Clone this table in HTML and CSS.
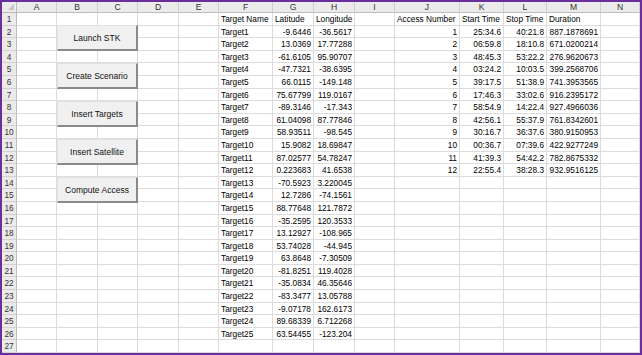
FILE: index.html
```html
<!DOCTYPE html>
<html>
<head>
<meta charset="utf-8">
<link rel="stylesheet" href="styles.css">
</head>
<body>
<div class="sheet">
  <div class="r hd"><span class="corner"></span><span>A</span><span>B</span><span>C</span><span>D</span><span>E</span><span>F</span><span>G</span><span>H</span><span>I</span><span>J</span><span>K</span><span>L</span><span>M</span><span>N</span></div>
  <div class="r"><span class="rh">1</span><span></span><span></span><span></span><span></span><span></span><span>Target Name</span><span>Latitude</span><span>Longitude</span><span></span><span>Access Number</span><span>Start Time</span><span>Stop Time</span><span>Duration</span><span></span></div>
  <div class="r"><span class="rh">2</span><span></span><span></span><span></span><span></span><span></span><span>Target1</span><span class="n">-9.6446</span><span class="n">-36.5617</span><span></span><span class="n">1</span><span class="n">25:34.6</span><span class="n">40:21.8</span><span class="n">887.1878691</span><span></span></div>
  <div class="r"><span class="rh">3</span><span></span><span></span><span></span><span></span><span></span><span>Target2</span><span class="n">13.0369</span><span class="n">17.77288</span><span></span><span class="n">2</span><span class="n">06:59.8</span><span class="n">18:10.8</span><span class="n">671.0200214</span><span></span></div>
  <div class="r"><span class="rh">4</span><span></span><span></span><span></span><span></span><span></span><span>Target3</span><span class="n">-61.6105</span><span class="n">95.90707</span><span></span><span class="n">3</span><span class="n">48:45.3</span><span class="n">53:22.2</span><span class="n">276.9620673</span><span></span></div>
  <div class="r"><span class="rh">5</span><span></span><span></span><span></span><span></span><span></span><span>Target4</span><span class="n">-47.7321</span><span class="n">-38.6395</span><span></span><span class="n">4</span><span class="n">03:24.2</span><span class="n">10:03.5</span><span class="n">399.2568706</span><span></span></div>
  <div class="r"><span class="rh">6</span><span></span><span></span><span></span><span></span><span></span><span>Target5</span><span class="n">66.0115</span><span class="n">-149.148</span><span></span><span class="n">5</span><span class="n">39:17.5</span><span class="n">51:38.9</span><span class="n">741.3953565</span><span></span></div>
  <div class="r"><span class="rh">7</span><span></span><span></span><span></span><span></span><span></span><span>Target6</span><span class="n">75.67799</span><span class="n">119.0167</span><span></span><span class="n">6</span><span class="n">17:46.3</span><span class="n">33:02.6</span><span class="n">916.2395172</span><span></span></div>
  <div class="r"><span class="rh">8</span><span></span><span></span><span></span><span></span><span></span><span>Target7</span><span class="n">-89.3146</span><span class="n">-17.343</span><span></span><span class="n">7</span><span class="n">58:54.9</span><span class="n">14:22.4</span><span class="n">927.4966036</span><span></span></div>
  <div class="r"><span class="rh">9</span><span></span><span></span><span></span><span></span><span></span><span>Target8</span><span class="n">61.04098</span><span class="n">87.77846</span><span></span><span class="n">8</span><span class="n">42:56.1</span><span class="n">55:37.9</span><span class="n">761.8342601</span><span></span></div>
  <div class="r"><span class="rh">10</span><span></span><span></span><span></span><span></span><span></span><span>Target9</span><span class="n">58.93511</span><span class="n">-98.545</span><span></span><span class="n">9</span><span class="n">30:16.7</span><span class="n">36:37.6</span><span class="n">380.9150953</span><span></span></div>
  <div class="r"><span class="rh">11</span><span></span><span></span><span></span><span></span><span></span><span>Target10</span><span class="n">15.9082</span><span class="n">18.69847</span><span></span><span class="n">10</span><span class="n">00:36.7</span><span class="n">07:39.6</span><span class="n">422.9277249</span><span></span></div>
  <div class="r"><span class="rh">12</span><span></span><span></span><span></span><span></span><span></span><span>Target11</span><span class="n">87.02577</span><span class="n">54.78247</span><span></span><span class="n">11</span><span class="n">41:39.3</span><span class="n">54:42.2</span><span class="n">782.8675332</span><span></span></div>
  <div class="r"><span class="rh">13</span><span></span><span></span><span></span><span></span><span></span><span>Target12</span><span class="n">0.223683</span><span class="n">41.6538</span><span></span><span class="n">12</span><span class="n">22:55.4</span><span class="n">38:28.3</span><span class="n">932.9516125</span><span></span></div>
  <div class="r"><span class="rh">14</span><span></span><span></span><span></span><span></span><span></span><span>Target13</span><span class="n">-70.5923</span><span class="n">3.220045</span><span></span><span></span><span></span><span></span><span></span><span></span></div>
  <div class="r"><span class="rh">15</span><span></span><span></span><span></span><span></span><span></span><span>Target14</span><span class="n">12.7286</span><span class="n">-74.1561</span><span></span><span></span><span></span><span></span><span></span><span></span></div>
  <div class="r"><span class="rh">16</span><span></span><span></span><span></span><span></span><span></span><span>Target15</span><span class="n">88.77648</span><span class="n">121.7872</span><span></span><span></span><span></span><span></span><span></span><span></span></div>
  <div class="r"><span class="rh">17</span><span></span><span></span><span></span><span></span><span></span><span>Target16</span><span class="n">-35.2595</span><span class="n">120.3533</span><span></span><span></span><span></span><span></span><span></span><span></span></div>
  <div class="r"><span class="rh">18</span><span></span><span></span><span></span><span></span><span></span><span>Target17</span><span class="n">13.12927</span><span class="n">-108.965</span><span></span><span></span><span></span><span></span><span></span><span></span></div>
  <div class="r"><span class="rh">19</span><span></span><span></span><span></span><span></span><span></span><span>Target18</span><span class="n">53.74028</span><span class="n">-44.945</span><span></span><span></span><span></span><span></span><span></span><span></span></div>
  <div class="r"><span class="rh">20</span><span></span><span></span><span></span><span></span><span></span><span>Target19</span><span class="n">63.8648</span><span class="n">-7.30509</span><span></span><span></span><span></span><span></span><span></span><span></span></div>
  <div class="r"><span class="rh">21</span><span></span><span></span><span></span><span></span><span></span><span>Target20</span><span class="n">-81.8251</span><span class="n">119.4028</span><span></span><span></span><span></span><span></span><span></span><span></span></div>
  <div class="r"><span class="rh">22</span><span></span><span></span><span></span><span></span><span></span><span>Target21</span><span class="n">-35.0834</span><span class="n">46.35646</span><span></span><span></span><span></span><span></span><span></span><span></span></div>
  <div class="r"><span class="rh">23</span><span></span><span></span><span></span><span></span><span></span><span>Target22</span><span class="n">-83.3477</span><span class="n">13.05788</span><span></span><span></span><span></span><span></span><span></span><span></span></div>
  <div class="r"><span class="rh">24</span><span></span><span></span><span></span><span></span><span></span><span>Target23</span><span class="n">-9.07178</span><span class="n">162.6173</span><span></span><span></span><span></span><span></span><span></span><span></span></div>
  <div class="r"><span class="rh">25</span><span></span><span></span><span></span><span></span><span></span><span>Target24</span><span class="n">89.68339</span><span class="n">6.712268</span><span></span><span></span><span></span><span></span><span></span><span></span></div>
  <div class="r"><span class="rh">26</span><span></span><span></span><span></span><span></span><span></span><span>Target25</span><span class="n">63.54455</span><span class="n">-123.204</span><span></span><span></span><span></span><span></span><span></span><span></span></div>
  <div class="r"><span class="rh">27</span><span></span><span></span><span></span><span></span><span></span><span></span><span></span><span></span><span></span><span></span><span></span><span></span><span></span><span></span></div>

  <button class="btn b1">Launch STK</button>
  <button class="btn b2">Create Scenario</button>
  <button class="btn b3">Insert Targets</button>
  <button class="btn b4">Insert Satellite</button>
  <button class="btn b5">Compute Access</button>
</div>
</body>
</html>
```

FILE: styles.css
```css
html, body {
  margin: 0;
  padding: 0;
  background: #ffffff;
}

.sheet {
  position: relative;
  width: 638px;
  height: 351px;
  border: 2px solid #6a2f9c;
  overflow: hidden;
  font-family: "Liberation Sans", Arial, sans-serif;
  font-size: 8.3px;
  color: #000;
}

.r {
  display: grid;
  grid-template-columns: 15px 40px 41px 40px 41px 40px 54px 41px 41px 40px 65px 44px 43px 54px 39px;
  height: 12.6px;
}

.r > span {
  box-sizing: border-box;
  border-right: 1px solid #dcdcdc;
  border-bottom: 1px solid #dcdcdc;
  padding: 0 2px;
  line-height: 12px;
  white-space: nowrap;
  overflow: hidden;
}

.r > span.n {
  text-align: right;
}

.r > span.rh {
  background: #ebebeb;
  color: #333;
  text-align: center;
  padding: 0;
  border-right: 1px solid #bcbcbc;
  border-bottom: 1px solid #d2d2d2;
}

.r.hd {
  height: 11px;
}

.r.hd > span {
  background: #ebebeb;
  color: #333;
  text-align: center;
  line-height: 10px;
  font-size: 8.6px;
  border-right: 1px solid #cfcfcf;
  border-bottom: 1px solid #bcbcbc;
}

.r.hd > span.corner {
  position: relative;
  border-right: 1px solid #bcbcbc;
}

.r.hd > span.corner::after {
  content: "";
  position: absolute;
  right: 2px;
  bottom: 2px;
  width: 0;
  height: 0;
  border-left: 6px solid transparent;
  border-bottom: 6px solid #c4c4c4;
}

.btn {
  position: absolute;
  left: 55px;
  width: 81px;
  height: 26px;
  margin: 0;
  padding: 0;
  box-sizing: border-box;
  background: #f0f0f0;
  border-top: 1px solid #e2e2e2;
  border-left: 1px solid #e2e2e2;
  border-right: 2px solid #8a8a8a;
  border-bottom: 2px solid #8a8a8a;
  font-family: "Liberation Sans", Arial, sans-serif;
  font-size: 8.5px;
  color: #111;
  text-align: center;
}

.b1 { top: 23px; }
.b2 { top: 61px; }
.b3 { top: 99px; }
.b4 { top: 137px; }
.b5 { top: 175px; }
```
